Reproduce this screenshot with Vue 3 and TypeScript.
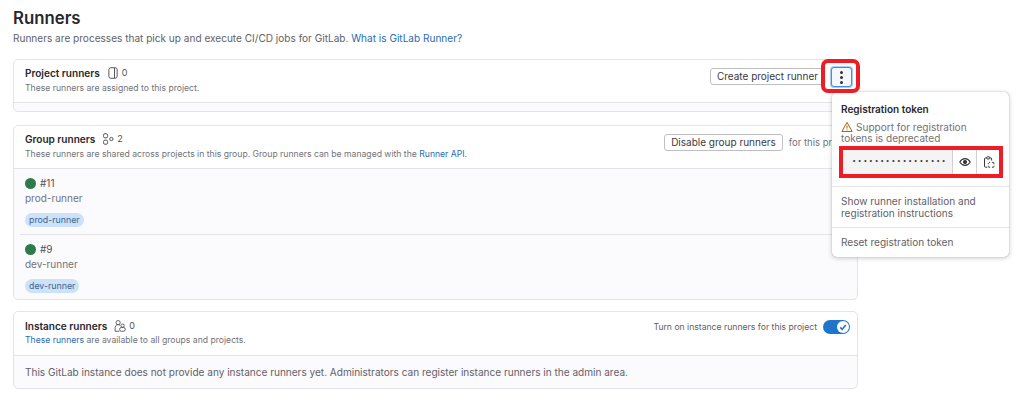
<template>
  <div class="page">
    <h1 class="title">Runners</h1>
    <p class="intro">
      Runners are processes that pick up and execute CI/CD jobs for GitLab.
      <a class="link">What is GitLab Runner?</a>
    </p>

    <section class="card first">
      <header class="card-head">
        <div class="head-text">
          <div class="name">
            <strong>Project runners</strong>
            <svg class="kind" viewBox="0 0 16 16" fill="none" stroke="#535158" stroke-width="1.3">
              <rect x="2.5" y="1" width="11" height="14" rx="2.5" />
              <path d="M10 1v14" />
            </svg>
            <span class="count">0</span>
          </div>
          <p class="desc">These runners are assigned to this project.</p>
        </div>
        <div class="actions">
          <button class="btn">Create project runner</button>
          <button class="more">
            <i></i><i></i><i></i>
          </button>
        </div>
      </header>
      <div class="empty-body"></div>
    </section>

    <section class="card second">
      <header class="card-head">
        <div class="head-text">
          <div class="name">
            <strong>Group runners</strong>
            <svg class="kind" viewBox="0 0 16 16" fill="none" stroke="#535158" stroke-width="1.3">
              <rect x="2" y="1" width="5.5" height="5.5" rx="2" />
              <rect x="2" y="9.5" width="5.5" height="5.5" rx="2" />
              <circle cx="12.5" cy="8" r="2.2" />
            </svg>
            <span class="count">2</span>
          </div>
          <p class="desc">
            These runners are shared across projects in this group. Group runners can be managed with the
            <a class="link">Runner API</a>.
          </p>
        </div>
        <div class="actions group-actions">
          <button class="btn">Disable group runners</button>
          <span class="for-project">for this project</span>
        </div>
      </header>
      <div class="runners">
        <div v-for="runner in runners" :key="runner.id" class="runner">
          <div class="runner-id"><span class="dot"></span>#{{ runner.id }}</div>
          <div class="runner-name">{{ runner.name }}</div>
          <span class="tag">{{ runner.name }}</span>
        </div>
      </div>
    </section>

    <section class="card third">
      <header class="card-head">
        <div class="head-text">
          <div class="name">
            <strong>Instance runners</strong>
            <svg class="kind" viewBox="0 0 16 16" fill="none" stroke="#535158" stroke-width="1.2">
              <circle cx="5.5" cy="3.5" r="2.8" />
              <path d="M1.5 15V10a4 4 0 0 1 6.5-3M1.5 15H7" />
              <circle cx="11.5" cy="7.5" r="2.2" />
              <rect x="7.5" y="10" width="7.5" height="5" rx="2.2" />
            </svg>
            <span class="count">0</span>
          </div>
          <p class="desc"><a class="link">These runners</a> are available to all groups and projects.</p>
        </div>
        <div class="actions toggle-wrap">
          <span class="toggle-label">Turn on instance runners for this project</span>
          <span class="toggle">
            <span class="knob">
              <svg viewBox="0 0 12 12" fill="none" stroke="#1f75cb" stroke-width="1.6">
                <path d="M3.2 6.4l2 2 3.6-4.4" />
              </svg>
            </span>
          </span>
        </div>
      </header>
      <div class="notice">
        This GitLab instance does not provide any instance runners yet. Administrators can register instance runners in the admin area.
      </div>
    </section>

    <div class="popover">
      <div class="pop-top">
        <div class="pop-title">Registration token</div>
        <div class="pop-warn">
          <svg class="warn" viewBox="0 0 16 16" fill="none" stroke="#ab6100" stroke-width="1.3">
            <path d="M8 1.8L14.8 14H1.2z" stroke-linejoin="round" />
            <path d="M8 6v4M8 11.2v1.2" />
          </svg>Support for registration tokens is deprecated
        </div>
        <div class="token">
          <span class="token-dots">•••••••••••••••••</span>
          <span class="token-btn">
            <svg viewBox="0 0 16 16" fill="none" stroke="#333238" stroke-width="1.4">
              <path d="M1 8c1.8-3 4.2-4.5 7-4.5S13.2 5 15 8c-1.8 3-4.2 4.5-7 4.5S2.8 11 1 8z" />
              <circle cx="8" cy="8" r="2" fill="#333238" />
            </svg>
          </span>
          <span class="token-btn">
            <svg viewBox="0 0 16 16" fill="none" stroke="#333238" stroke-width="1.3">
              <path d="M5.5 15H3.5A1.5 1.5 0 0 1 2 13.5V4a1.5 1.5 0 0 1 1.5-1.5H5" />
              <path d="M9 2.5h1A1.5 1.5 0 0 1 11.5 4v2" />
              <rect x="5" y="1" width="4" height="3" rx="1" />
              <path d="M8 8.5h1.5M12 8.5h1.5a1 1 0 0 1 1 1V11M14.5 13v1a1 1 0 0 1-1 1H12M9.5 15H8a1 1 0 0 1-1-1v-1M7 11V9.5" />
            </svg>
          </span>
        </div>
      </div>
      <div class="pop-item two-line">Show runner installation and registration instructions</div>
      <div class="pop-item reset">Reset registration token</div>
    </div>

    <span class="mark mark-more"></span>
    <span class="mark mark-token"></span>
  </div>
</template>

<script setup lang="ts">
const runners = [
  { id: 11, name: "prod-runner" },
  { id: 9, name: "dev-runner" },
];
</script>

<style>
html,
body {
  margin: 0;
  background: #fff;
}
</style>

<style scoped>
.page {
  position: relative;
  width: 1024px;
  height: 407px;
  overflow: hidden;
  box-sizing: border-box;
  padding: 8px 166px 0 13px;
  font-family: Inter, "Liberation Sans", sans-serif;
  color: #737278;
  background: #fff;
}

.title {
  margin: 0;
  font-size: 16.8px;
  line-height: 20px;
  font-weight: 600;
  color: #28272d;
}

.intro {
  margin: 4px 0 0;
  font-size: 10.07px;
  line-height: 13px;
  color: #626168;
}

.link {
  color: #2a6cb0;
}

.card {
  border: 1px solid #e4e4e7;
  border-radius: 5px;
  background: #fbfafd;
  box-sizing: border-box;
}

.first {
  margin-top: 14px;
  height: 53px;
}

.second {
  margin-top: 13px;
  height: 175px;
}

.third {
  margin-top: 11px;
  height: 78px;
}

.card-head {
  display: flex;
  justify-content: space-between;
  background: #fff;
  border-bottom: 1px solid #e4e4e7;
  border-radius: 5px 5px 0 0;
  padding: 6px 5px 0 11px;
  height: 43px;
  box-sizing: border-box;
}

.third .card-head {
  height: 44px;
  padding-top: 7px;
}

.name {
  display: flex;
  align-items: center;
  gap: 3px;
  font-size: 10.05px;
  line-height: 14px;
  color: #28272d;
}

.name strong {
  font-weight: 600;
}

.kind {
  width: 12px;
  height: 12px;
  margin-left: 4px;
}

.count {
  font-size: 9px;
  color: #535158;
}

.desc {
  margin: 2px 0 0;
  font-size: 8.65px;
  line-height: 13px;
  color: #737278;
}

.third .desc {
  margin-top: 1px;
}

.actions {
  display: flex;
  align-items: flex-start;
  gap: 6px;
}

.btn {
  height: 17px;
  margin-top: 2px;
  padding: 0 6px;
  border: 1px solid #bfbfc3;
  border-radius: 3px;
  background: #fff;
  font: 10px/15px Inter, "Liberation Sans", sans-serif;
  color: #3a383f;
}

.more {
  display: flex;
  flex-direction: column;
  align-items: center;
  justify-content: center;
  gap: 2px;
  width: 21px;
  height: 20px;
  margin-top: 1px;
  padding: 0;
  border: 1px solid #428fdc;
  border-radius: 3px;
  background: #f4f7fb;
  box-shadow: 0 0 0 1px #a9cdf0;
}

.more i {
  width: 3px;
  height: 3px;
  border-radius: 50%;
  background: #333238;
}

.group-actions {
  margin-right: -2px;
}

.for-project {
  margin-top: 1px;
  font-size: 9.5px;
  line-height: 19px;
  color: #737278;
}

.runner {
  margin: 0 0 0 6px;
  padding: 6px 0 0 5px;
  height: 65px;
  box-sizing: border-box;
}

.runner + .runner {
  border-top: 1px solid #e4e4e7;
}

.runner-id {
  display: flex;
  align-items: center;
  gap: 4px;
  font-size: 10px;
  line-height: 16px;
  color: #535158;
}

.dot {
  width: 11px;
  height: 11px;
  border-radius: 50%;
  background: #2f7a4c;
}

.runner-name {
  font-size: 10px;
  line-height: 14px;
  color: #737278;
}

.tag {
  display: inline-block;
  margin-top: 8px;
  padding: 0 4px;
  height: 14px;
  border-radius: 7px;
  background: #cbe2f9;
  font-size: 8.8px;
  line-height: 14px;
  color: #41648f;
}

.toggle-wrap {
  align-items: center;
  gap: 6px;
  height: 16px;
  margin: 0 2px 0 0;
}

.toggle-label {
  font-size: 8.65px;
  color: #626168;
}

.toggle {
  display: flex;
  align-items: center;
  justify-content: flex-end;
  width: 27px;
  height: 14px;
  padding-right: 1px;
  box-sizing: border-box;
  border-radius: 7px;
  background: #1f75cb;
}

.knob {
  display: flex;
  width: 12px;
  height: 12px;
  border-radius: 50%;
  background: #fff;
}

.notice {
  padding: 9px 11px 0;
  font-size: 10.05px;
  line-height: 14px;
  color: #626168;
}

.popover {
  position: absolute;
  left: 832px;
  top: 92px;
  width: 177px;
  height: 165px;
  box-sizing: border-box;
  background: #fff;
  border-radius: 5px;
  box-shadow: 0 0 1px #8d8d91, 0 1px 5px rgba(0, 0, 0, 0.22);
  font-size: 10.05px;
  color: #626168;
}

.pop-top {
  padding: 10px 8px 11px 9px;
  border-bottom: 1px solid #e4e4e7;
}

.pop-title {
  font-weight: 600;
  font-size: 10px;
  line-height: 14px;
  color: #28272d;
}

.pop-warn {
  margin-top: 5px;
  line-height: 11px;
  color: #737278;
  width: 140px;
}

.warn {
  width: 12px;
  height: 12px;
  margin-right: 3px;
  vertical-align: -2px;
}

.token {
  display: flex;
  align-items: stretch;
  height: 24px;
  margin-top: 5px;
  background: #f4f4f5;
  border: 1px solid #e4e4e7;
}

.token-dots {
  flex: 1;
  padding-left: 10px;
  font-family: "Liberation Mono", monospace;
  font-size: 7px;
  line-height: 23px;
  letter-spacing: 1.4px;
  color: #333238;
  white-space: nowrap;
}

.token-btn {
  display: flex;
  align-items: center;
  justify-content: center;
  width: 23px;
  background: #fff;
  border-left: 1px solid #d0d0d3;
}

.token-btn svg {
  width: 12px;
  height: 12px;
}

.pop-item {
  padding: 0 9px;
  line-height: 12px;
}

.two-line {
  padding: 8px 9px 8px;
  border-bottom: 1px solid #e4e4e7;
}

.reset {
  padding-top: 8px;
}

.mark {
  position: absolute;
  box-sizing: border-box;
  pointer-events: none;
  border: 4px solid #ee1c25;
}

.mark-more {
  left: 821px;
  top: 59px;
  width: 39px;
  height: 34px;
  border-radius: 7px;
}

.mark-token {
  left: 839px;
  top: 146px;
  width: 164px;
  height: 32px;
}
</style>
